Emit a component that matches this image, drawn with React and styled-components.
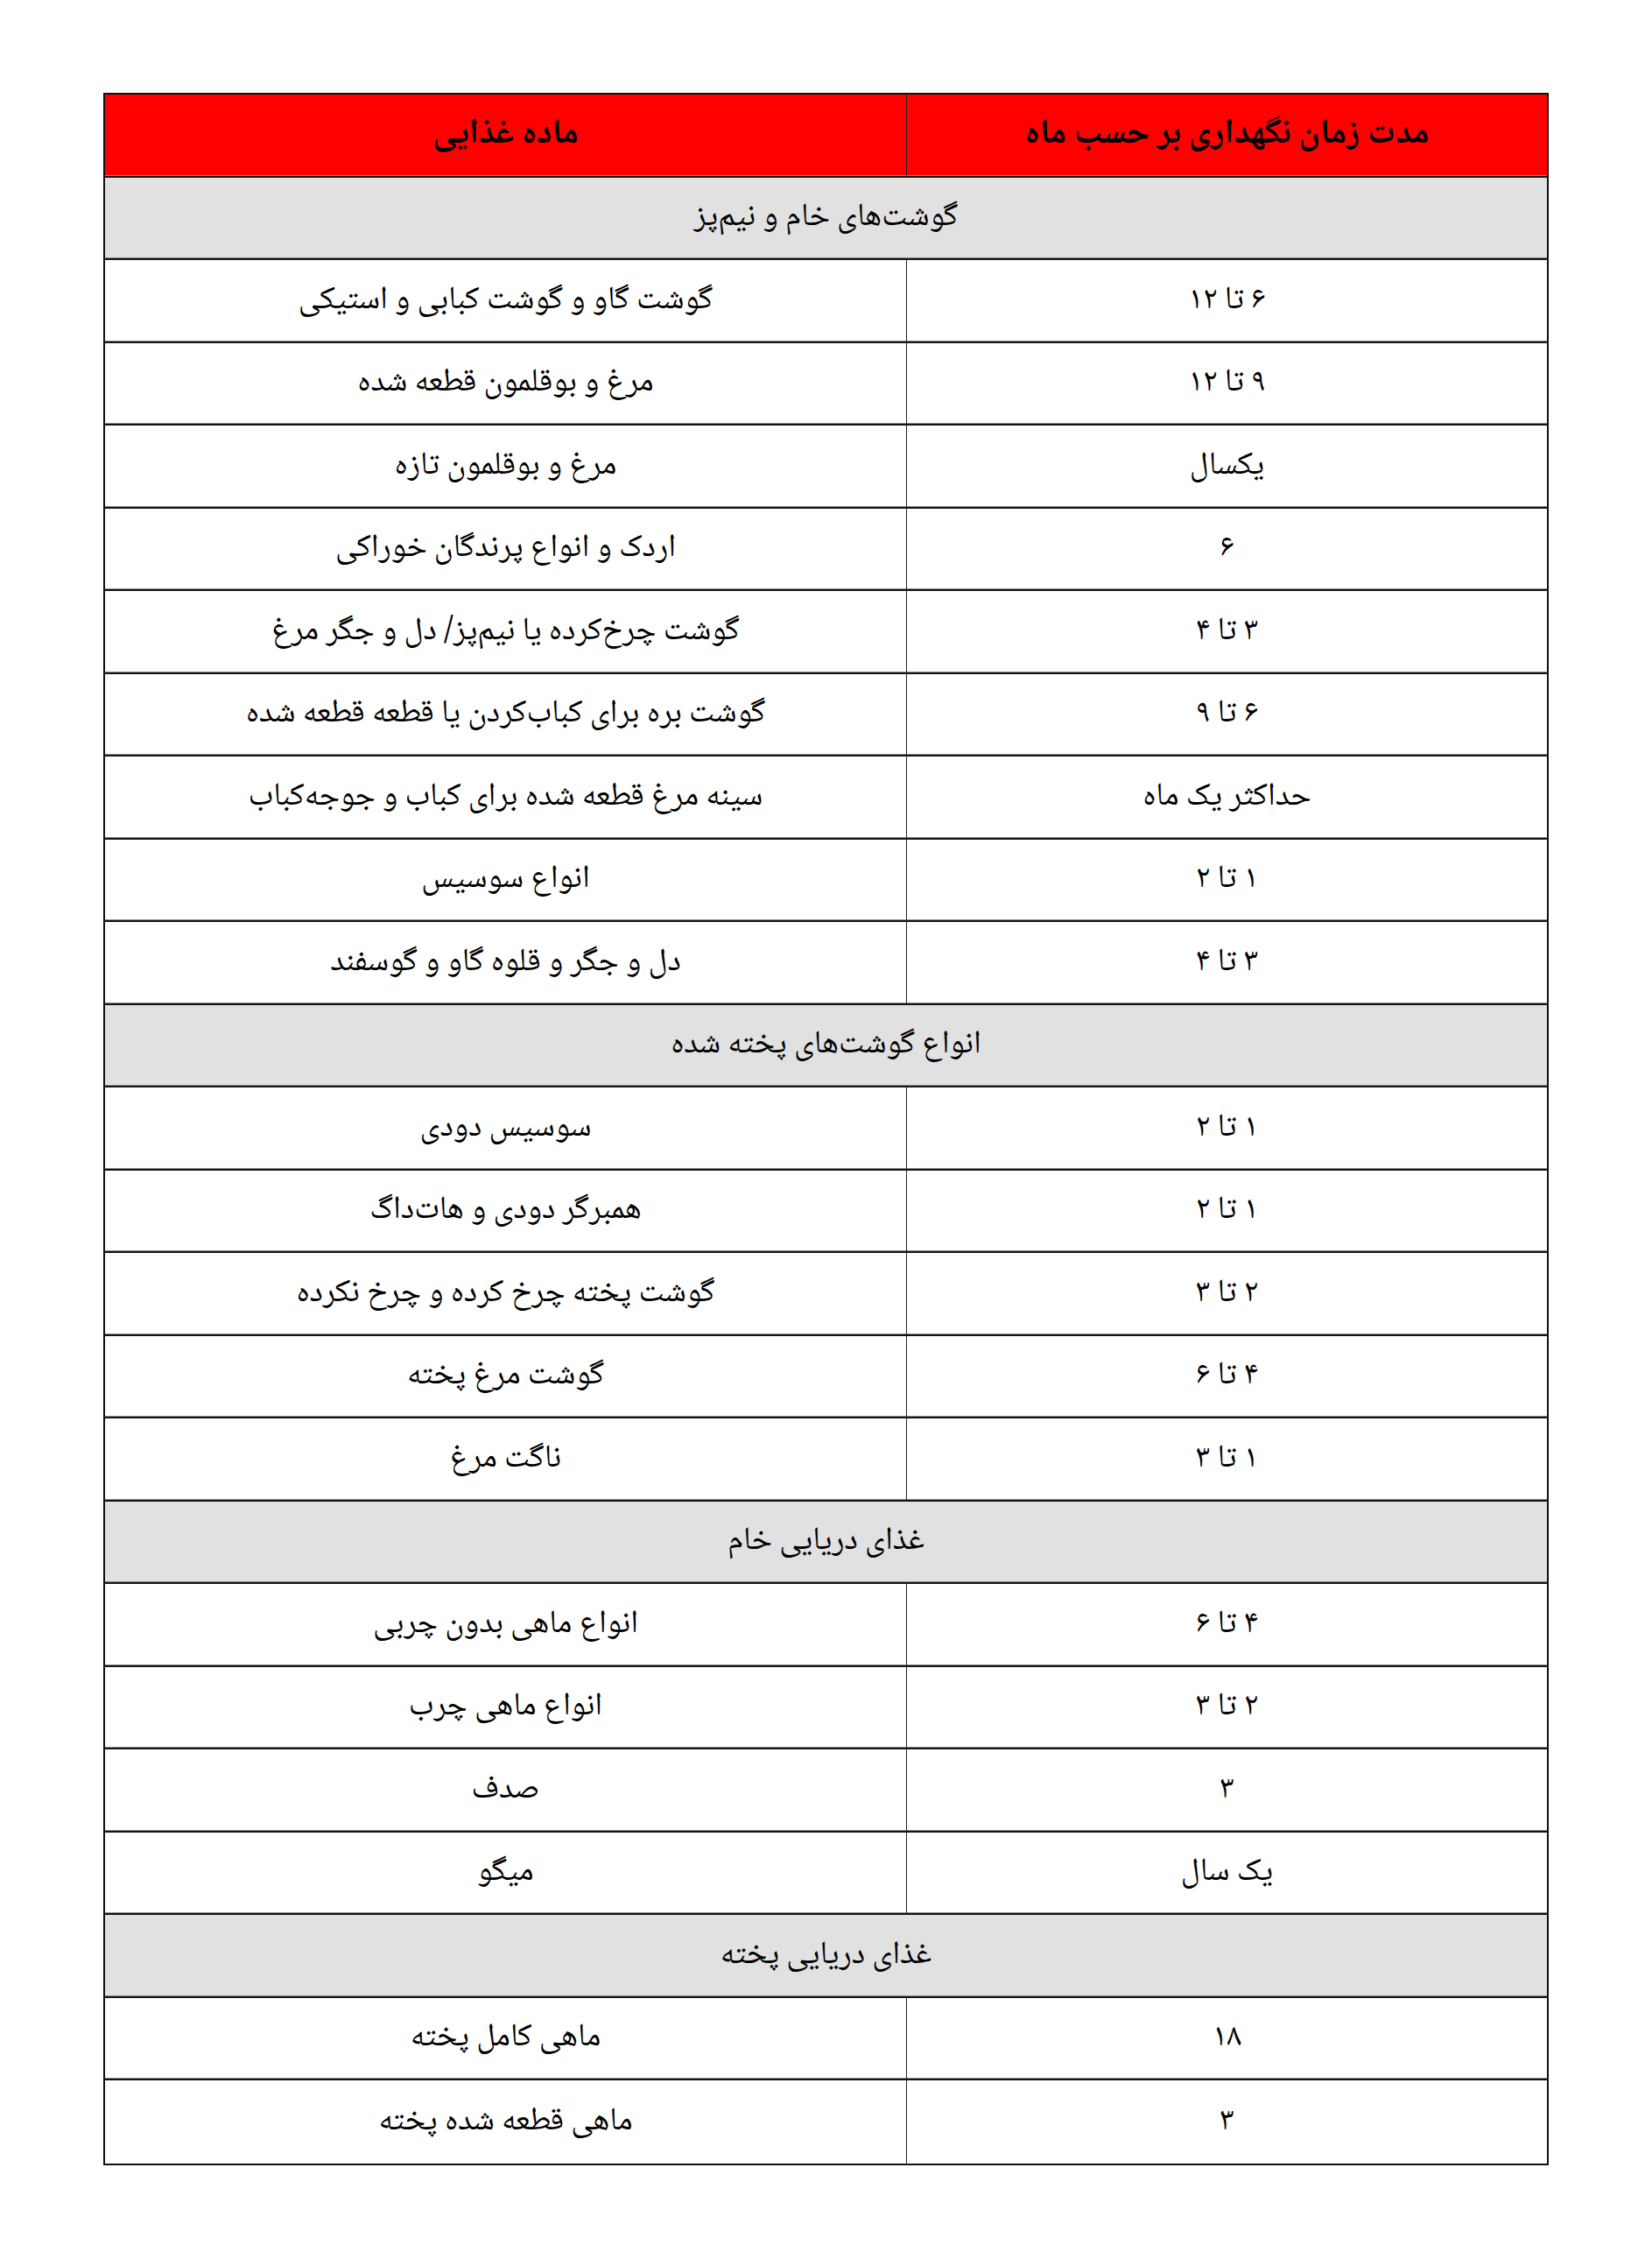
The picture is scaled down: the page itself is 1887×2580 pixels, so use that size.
import React from "react";
import styled, { createGlobalStyle } from "styled-components";

const sections = [
  {
    title: "گوشت‌های خام و نیم‌پز",
    rows: [
      ["۶ تا ۱۲", "گوشت گاو و گوشت کبابی و استیکی"],
      ["۹ تا ۱۲", "مرغ و بوقلمون قطعه شده"],
      ["یکسال", "مرغ و بوقلمون تازه"],
      ["۶", "اردک و انواع پرندگان خوراکی"],
      ["۳ تا ۴", "گوشت چرخ‌کرده یا نیم‌پز/ دل و جگر مرغ"],
      ["۶ تا ۹", "گوشت بره برای کباب‌کردن یا قطعه قطعه شده"],
      ["حداکثر یک ماه", "سینه مرغ قطعه شده برای کباب و جوجه‌کباب"],
      ["۱ تا ۲", "انواع سوسیس"],
      ["۳ تا ۴", "دل و جگر و قلوه گاو و گوسفند"],
    ],
  },
  {
    title: "انواع گوشت‌های پخته شده",
    rows: [
      ["۱ تا ۲", "سوسیس دودی"],
      ["۱ تا ۲", "همبرگر دودی و هات‌داگ"],
      ["۲ تا ۳", "گوشت پخته چرخ کرده و چرخ نکرده"],
      ["۴ تا ۶", "گوشت مرغ پخته"],
      ["۱ تا ۳", "ناگت مرغ"],
    ],
  },
  {
    title: "غذای دریایی خام",
    rows: [
      ["۴ تا ۶", "انواع ماهی بدون چربی"],
      ["۲ تا ۳", "انواع ماهی چرب"],
      ["۳", "صدف"],
      ["یک سال", "میگو"],
    ],
  },
  {
    title: "غذای دریایی پخته",
    rows: [
      ["۱۸", "ماهی کامل پخته"],
      ["۳", "ماهی قطعه شده پخته"],
    ],
  },
];

const GlobalStyle = createGlobalStyle`
  html, body {
    margin: 0;
    padding: 0;
    background: #ffffff;
  }
  body {
    font-family: "Noto Naskh Arabic", "Noto Sans Arabic", "DejaVu Sans", sans-serif;
    color: #000;
  }
`;

const Page = styled.div`
  padding: 106px 0 100px 118px;
`;

const Table = styled.div`
  direction: rtl;
  width: 1651px;
  border: 2px solid #111;
  box-sizing: border-box;
  display: flex;
  flex-direction: column;
`;

const Row = styled.div`
  display: grid;
  grid-template-columns: 731px 1fr;
  height: 94.5px;
  box-sizing: border-box;
  border-bottom: 2px solid #151515;
  box-shadow: inset 0 -1px 0 #8a8a8a;
  background: ${(p) => p.$bg || "#ffffff"};

  &:last-child {
    border-bottom: none;
    box-shadow: none;
  }
`;

const Cell = styled.div`
  display: flex;
  align-items: center;
  justify-content: center;
  font-size: ${(p) => (p.$head ? "40px" : "37px")};
  font-weight: ${(p) => (p.$head ? 700 : 400)};
  white-space: nowrap;

  & + & {
    border-right: 1px solid #222;
  }
`;

const GroupCell = styled.div`
  grid-column: 1 / -1;
  display: flex;
  align-items: center;
  justify-content: center;
  font-size: 37px;
`;

export default function App() {
  return (
    <>
      <GlobalStyle />
      <Page>
        <Table>
          <Row $bg="#ff0000">
            <Cell $head>مدت زمان نگهداری بر حسب ماه</Cell>
            <Cell $head>ماده غذایی</Cell>
          </Row>
          {sections.map((s) => (
            <React.Fragment key={s.title}>
              <Row $bg="#e1e1e1">
                <GroupCell>{s.title}</GroupCell>
              </Row>
              {s.rows.map(([time, food], i) => (
                <Row key={s.title + i}>
                  <Cell>{time}</Cell>
                  <Cell>{food}</Cell>
                </Row>
              ))}
            </React.Fragment>
          ))}
        </Table>
      </Page>
    </>
  );
}
